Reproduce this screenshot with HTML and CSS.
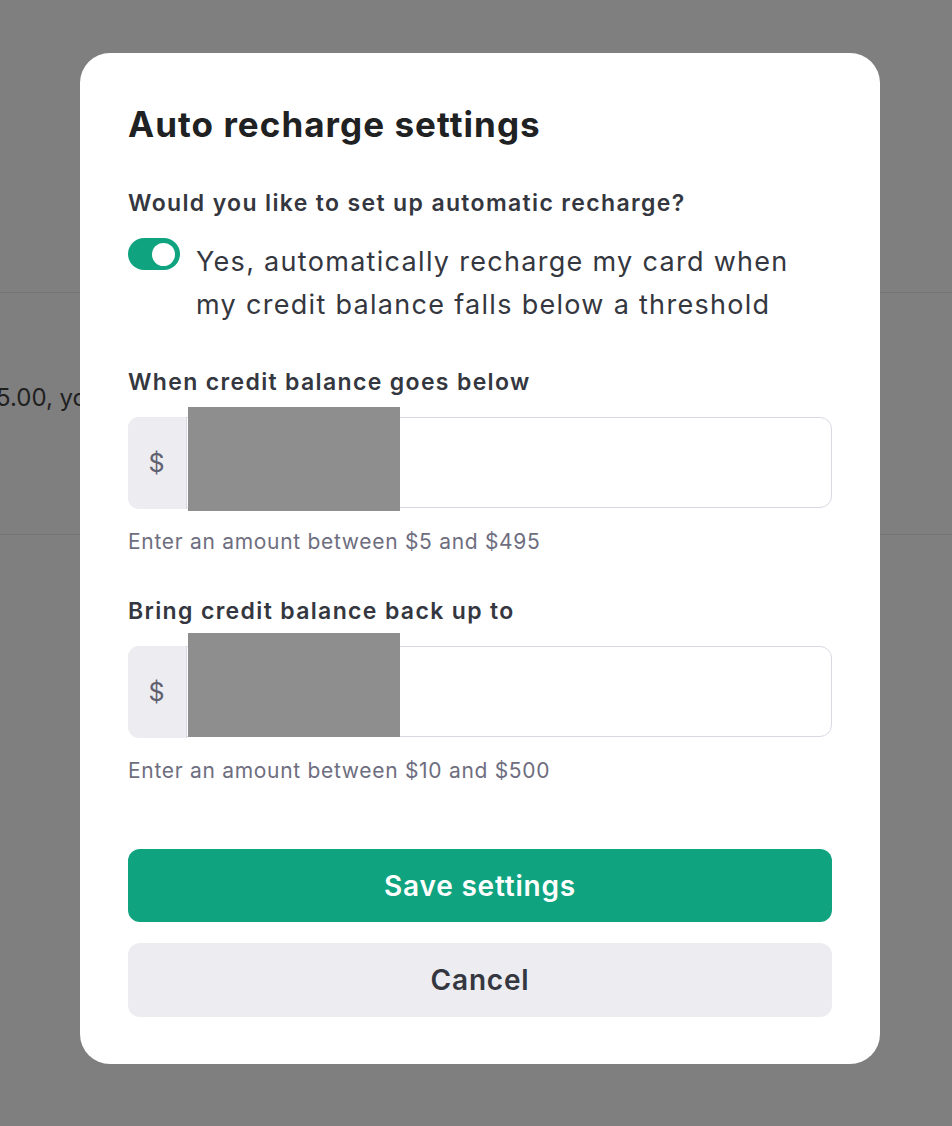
FILE: index.html
```html
<!DOCTYPE html>
<html lang="en">
<head>
<meta charset="utf-8">
<title>Auto recharge settings</title>
<link rel="stylesheet" href="styles.css">
</head>
<body>
<div class="page">
  <div class="page-section">
    <p class="page-text">5.00, you'll be charged</p>
  </div>
</div>

<div class="overlay">
  <div class="modal">
    <h1 class="modal-title">Auto recharge settings</h1>

    <div class="question">Would you like to set up automatic recharge?</div>
    <div class="toggle-row">
      <span class="toggle"><span class="toggle-knob"></span></span>
      <span class="toggle-text">Yes, automatically recharge my card when my credit balance falls below a threshold</span>
    </div>

    <div class="field field-first">
      <div class="field-label">When credit balance goes below</div>
      <div class="input-group">
        <span class="prefix">$</span>
        <span class="input-area"></span>
        <span class="redact"></span>
      </div>
      <div class="helper">Enter an amount between $5 and $495</div>
    </div>

    <div class="field">
      <div class="field-label">Bring credit balance back up to</div>
      <div class="input-group">
        <span class="prefix">$</span>
        <span class="input-area"></span>
        <span class="redact redact-second"></span>
      </div>
      <div class="helper">Enter an amount between $10 and $500</div>
    </div>

    <div class="actions">
      <button class="btn btn-primary">Save settings</button>
      <button class="btn btn-secondary">Cancel</button>
    </div>
  </div>
</div>
</body>
</html>
```

FILE: styles.css
```css
* { box-sizing: border-box; }

html, body {
  margin: 0;
  padding: 0;
}

body {
  width: 952px;
  height: 1126px;
  overflow: hidden;
  background: #7f7f7f;
  font-family: Inter, "Noto Sans", sans-serif;
  position: relative;
}

.page {
  padding-top: 292px;
}

.page-section {
  border-top: 1px solid #747474;
  border-bottom: 1px solid #747474;
  height: 243px;
  padding-top: 90px;
}

.page-text {
  margin: 0 0 0 -4px;
  font-size: 24px;
  line-height: 30px;
  color: #1f1f1f;
  white-space: nowrap;
}

.overlay {
  position: fixed;
  inset: 0;
  display: flex;
  justify-content: flex-start;
  align-items: flex-start;
  padding: 53px 0 0 80px;
}

.modal {
  width: 800px;
  height: 1011px;
  background: #ffffff;
  border-radius: 30px;
  padding: 51px 48px 0 48px;
  display: flex;
  flex-direction: column;
}

.modal-title {
  margin: 0;
  font-size: 35px;
  line-height: 40px;
  font-weight: 700;
  color: #202123;
  letter-spacing: 1.05px;
}

.question {
  margin-top: 45px;
  font-size: 23px;
  line-height: 28px;
  font-weight: 600;
  color: #353740;
  letter-spacing: 1.35px;
}

.toggle-row {
  margin-top: 20px;
  display: flex;
  align-items: flex-start;
  gap: 16px;
}

.toggle {
  flex: 0 0 auto;
  width: 52px;
  height: 32px;
  margin-top: 1px;
  border-radius: 16px;
  background: #10a37f;
  display: flex;
  align-items: center;
  justify-content: flex-end;
  padding-right: 5px;
}

.toggle-knob {
  width: 23px;
  height: 23px;
  border-radius: 50%;
  background: #ffffff;
}

.toggle-text {
  padding-top: 3px;
  font-size: 27px;
  line-height: 43px;
  color: #353740;
  letter-spacing: 1.3px;
  max-width: 630px;
}

.field-first {
  margin-top: 42px;
}

.field + .field {
  margin-top: 41px;
}

.field-label {
  font-size: 23px;
  line-height: 28px;
  font-weight: 600;
  color: #353740;
  letter-spacing: 1.35px;
}

.input-group {
  position: relative;
  margin-top: 21px;
  height: 91px;
  display: flex;
  border: 1.5px solid #d9d9e3;
  border-radius: 12px;
}

.prefix {
  width: 59px;
  background: #ececf1;
  border-radius: 11px 0 0 11px;
  display: flex;
  align-items: center;
  justify-content: center;
  font-size: 25px;
  color: #5f6170;
  margin: -1.5px 0 -1.5px -1.5px;
  border-right: 1.5px solid #d9d9e3;
}

.input-area {
  flex: 1;
}

.redact {
  position: absolute;
  left: 59px;
  top: -11px;
  width: 212px;
  bottom: -4px;
  background: #8e8e8e;
}

.redact-second {
  top: -14px;
  bottom: -1px;
}

.helper {
  margin-top: 20px;
  font-size: 21px;
  line-height: 28px;
  color: #6e6e80;
  letter-spacing: 0.7px;
}

.actions {
  margin-top: 64px;
  display: flex;
  flex-direction: column;
  gap: 21px;
}

.btn {
  display: block;
  width: 100%;
  height: 73px;
  border: none;
  border-radius: 12px;
  font-family: Inter, "Noto Sans", sans-serif;
  font-size: 28px;
  font-weight: 600;
  letter-spacing: 0.8px;
  cursor: pointer;
}

.btn-secondary {
  height: 74px;
}

.btn-primary {
  background: #10a37f;
  color: #ffffff;
}

.btn-secondary {
  background: #ececf1;
  color: #353740;
}
```
